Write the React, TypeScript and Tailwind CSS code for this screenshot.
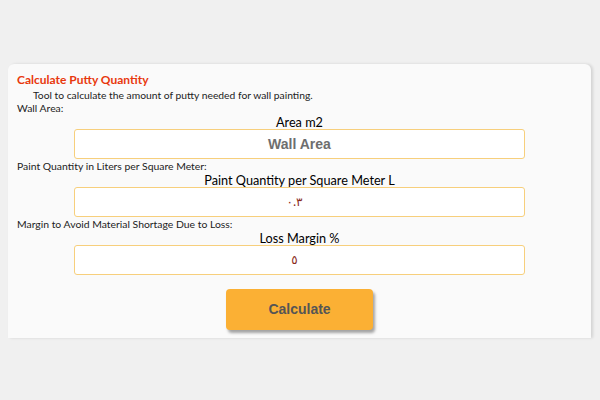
import React from 'react'

const comic = { fontFamily: '"Comic Sans MS", Lato, sans-serif' }

interface FieldProps {
  hint: string
  label: string
  placeholder?: string
  value?: string
}

const Field: React.FC<FieldProps> = ({ hint, label, placeholder, value }) => {
  return (
    <div className="flex flex-col">
      <div className="h-[14px] text-[10.4px] leading-[14px] text-[#222]">{hint}</div>
      <div className="h-[14px] text-center text-[12.7px] leading-[14px] text-black">
        {label}
      </div>
      <div className="flex justify-center">
        <div className="flex h-[30px] w-[451px] items-center justify-center rounded-[3px] border border-[#f7cf7c] bg-white">
          {placeholder ? (
            <span
              className="text-[14px] font-bold text-[#6e6e6e]"
              style={{ fontFamily: '"Liberation Sans", Arial, sans-serif' }}>
              {placeholder}
            </span>
          ) : (
            <span
              className="-ml-[10px] text-[12px] text-[#8a2b1b]"
              style={{ fontFamily: '"Noto Sans", "DejaVu Sans", sans-serif' }}
              dir="rtl">
              {value}
            </span>
          )}
        </div>
      </div>
    </div>
  )
}

export default function App() {
  return (
    <div className="h-[400px] w-[600px] bg-[#f0f0f0] pt-[64px]" style={comic}>
      <div className="mx-[8px] h-[274px] w-[583px] rounded-t-[6px] bg-[#fafafa] px-[9px] pt-[9px] shadow-[2px_0_3px_rgba(0,0,0,0.12)]">
        <h1 className="h-[14px] text-[12px] leading-[14px] font-bold text-[#e8380d]">
          Calculate Putty Quantity
        </h1>
        <p className="mt-[3px] h-[11px] pl-[16px] text-[10.3px] leading-[11px] text-[#222]">
          Tool to calculate the amount of putty needed for wall painting.
        </p>
        <div className="flex flex-col">
          <Field hint="Wall Area:" label="Area m2" placeholder="Wall Area" />
          <Field hint="Paint Quantity in Liters per Square Meter:" label="Paint Quantity per Square Meter L" value="٠.٣" />
          <Field hint="Margin to Avoid Material Shortage Due to Loss:" label="Loss Margin %" value="٥" />
        </div>
        <div className="mt-[14px] flex justify-center">
          <button
            className="h-[41px] w-[147px] rounded-[4px] bg-[#fbb034] text-[14px] font-bold text-[#555] shadow-[2px_3px_3px_rgba(0,0,0,0.35)]"
            style={{ fontFamily: '"Liberation Sans", Arial, sans-serif' }}>
            Calculate
          </button>
        </div>
      </div>
    </div>
  )
}
